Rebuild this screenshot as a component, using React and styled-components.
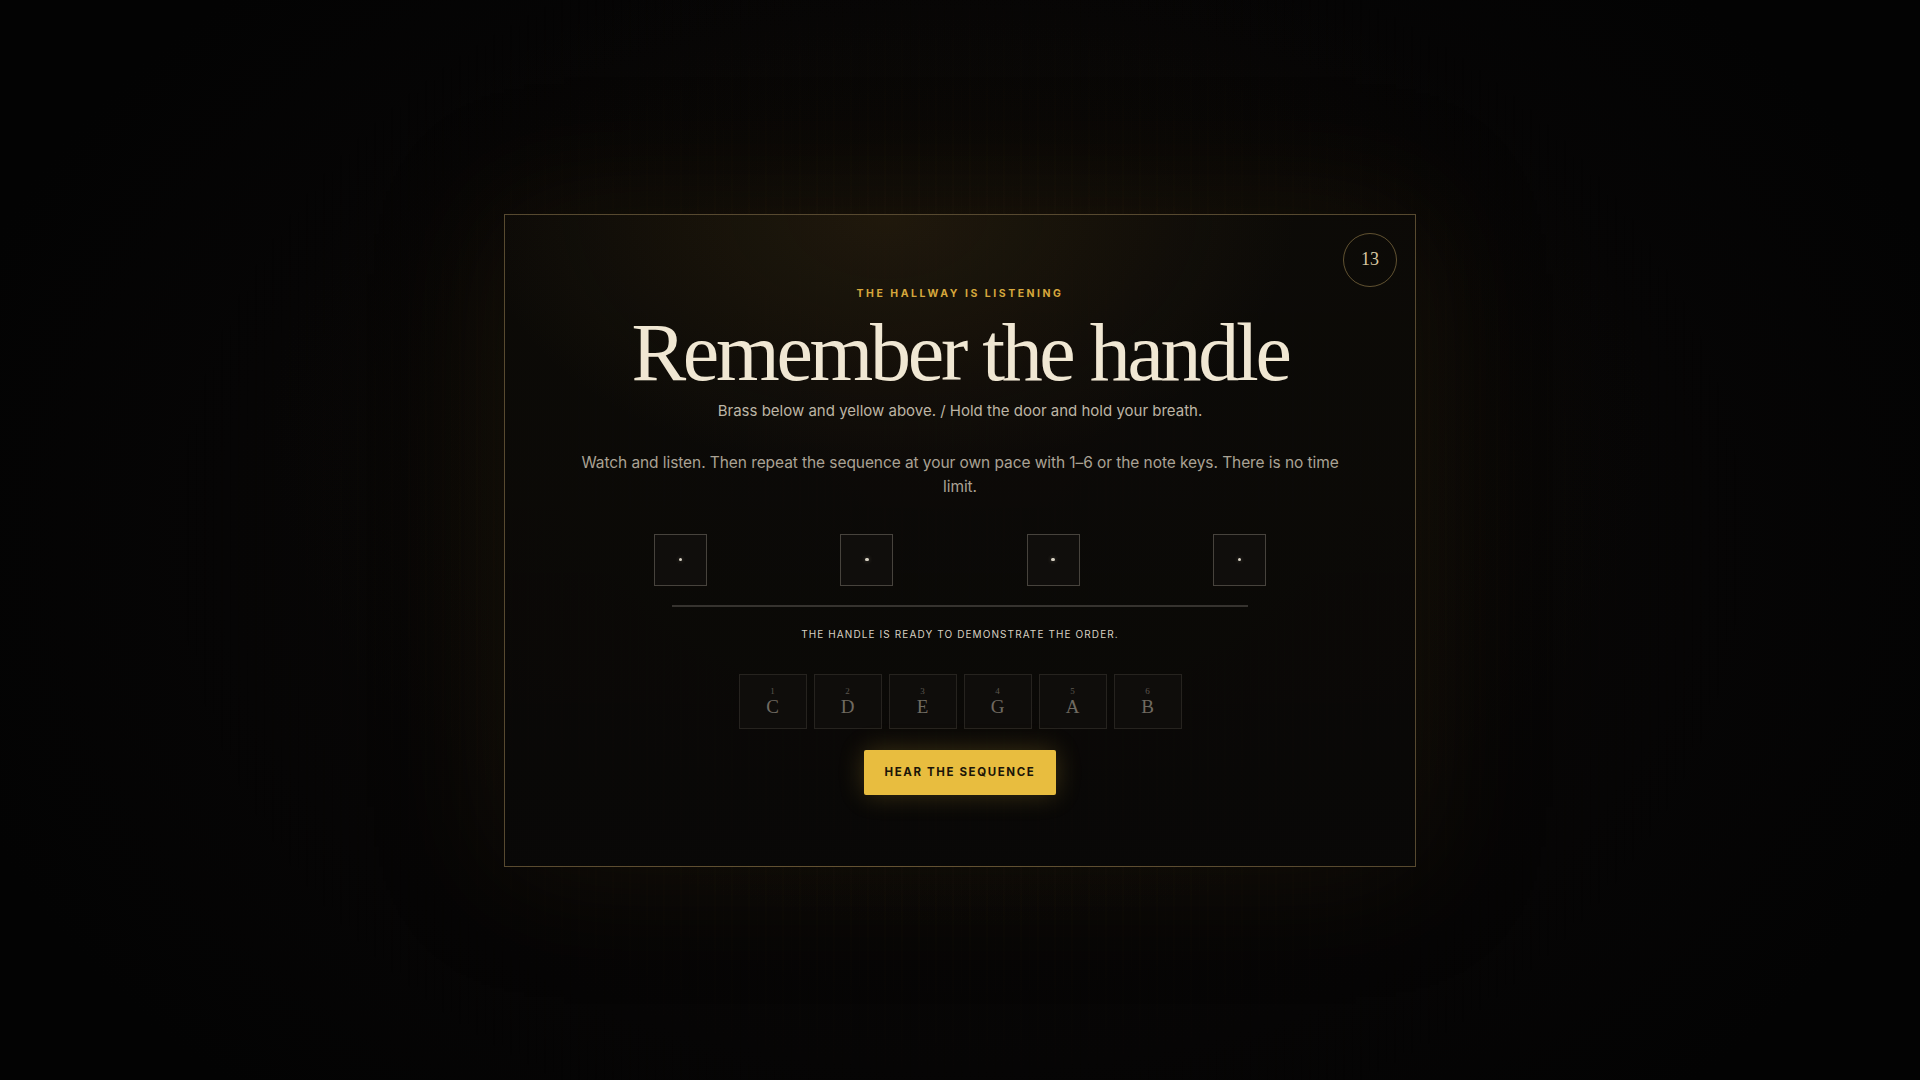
import styled, { createGlobalStyle } from 'styled-components';

const SANS = `Inter, 'Noto Sans', 'Liberation Sans', sans-serif`;
const SERIF = `'Liberation Serif', 'DejaVu Serif', serif`;

const GlobalStyle = createGlobalStyle`
	* { box-sizing: border-box; }
	html, body { margin: 0; padding: 0; background: #050404; }
	body { font-family: ${SANS}; }
`;

const SLOTS = [0, 1, 2, 3];
const NOTES = [
	{ key: '1', note: 'C' },
	{ key: '2', note: 'D' },
	{ key: '3', note: 'E' },
	{ key: '4', note: 'G' },
	{ key: '5', note: 'A' },
	{ key: '6', note: 'B' },
];

function App() {
	return (
		<Page>
			<GlobalStyle />
			<Panel>
				<Badge>13</Badge>
				<Eyebrow>The hallway is listening</Eyebrow>
				<Title>Remember the handle</Title>
				<Subtitle>Brass below and yellow above. / Hold the door and hold your breath.</Subtitle>
				<Body>
					Watch and listen. Then repeat the sequence at your own pace with 1–6 or the note keys. There is no
					time limit.
				</Body>

				<SlotRow>
					{SLOTS.map((i) => (
						<Slot key={i}>
							<SlotDot />
						</Slot>
					))}
				</SlotRow>
				<Track />
				<Status>The handle is ready to demonstrate the order.</Status>

				<Keys>
					{NOTES.map((n) => (
						<NoteKey key={n.key} type='button' disabled>
							<KeyNum>{n.key}</KeyNum>
							<KeyNote>{n.note}</KeyNote>
						</NoteKey>
					))}
				</Keys>

				<PlayButton type='button'>Hear the sequence</PlayButton>
			</Panel>
		</Page>
	);
}

const Page = styled.div`
	position: relative;
	min-height: 100vh;
	display: flex;
	align-items: center;
	justify-content: center;
	background:
		radial-gradient(ellipse 36% 46% at 50% 40%, rgba(72, 54, 18, 0.3), rgba(40, 30, 10, 0.1) 60%, transparent 100%),
		radial-gradient(ellipse 55% 70% at 50% 50%, #0b0907 0%, #060505 70%, #030303 100%);

	// curtain streaks, faded out toward the edges
	&::before {
		content: '';
		position: absolute;
		inset: 0;
		pointer-events: none;
		background: repeating-linear-gradient(
			90deg,
			rgba(120, 95, 50, 0.04) 0 2px,
			transparent 2px 9px,
			rgba(90, 70, 35, 0.03) 9px 10px,
			transparent 10px 17px
		);
		-webkit-mask-image: radial-gradient(ellipse 42% 60% at 50% 50%, #000 40%, transparent 100%);
		mask-image: radial-gradient(ellipse 42% 60% at 50% 50%, #000 40%, transparent 100%);
	}
`;

const Panel = styled.section`
	position: relative;
	z-index: 1;
	width: 912px;
	padding: 72px 56px 71px;
	display: flex;
	flex-direction: column;
	align-items: center;
	border: 1px solid rgba(196, 164, 104, 0.42);
	background:
		radial-gradient(ellipse 45% 40% at 42% 0%, rgba(110, 82, 30, 0.2), transparent 100%),
		linear-gradient(180deg, rgba(12, 10, 7, 0.92), rgba(9, 8, 7, 0.96));
	box-shadow: 0 0 120px rgba(60, 45, 15, 0.25);
`;

const Badge = styled.div`
	position: absolute;
	top: 18px;
	right: 18px;
	width: 54px;
	height: 54px;
	border-radius: 50%;
	border: 1px solid rgba(200, 168, 100, 0.45);
	display: flex;
	align-items: center;
	justify-content: center;
	font-family: ${SERIF};
	font-size: 18px;
	color: #d8c7a0;
`;

const Eyebrow = styled.div`
	font-size: 10.5px;
	line-height: 14px;
	font-weight: 700;
	letter-spacing: 0.24em;
	text-transform: uppercase;
	color: #d6a73c;
`;

const Title = styled.h1`
	margin: 11px 0 0;
	font-family: ${SERIF};
	font-weight: 400;
	font-size: 82px;
	line-height: 82px;
	letter-spacing: -0.04em;
	color: #f0e7d3;
	white-space: nowrap;
`;

const Subtitle = styled.p`
	margin: 6px 0 0;
	font-size: 15px;
	line-height: 22px;
	color: #bdb5a5;
`;

const Body = styled.p`
	margin: 29px 0 0;
	max-width: 790px;
	font-size: 15.5px;
	line-height: 24px;
	letter-spacing: -0.005em;
	text-align: center;
	color: #aaa294;
`;

const SlotRow = styled.div`
	margin-top: 35px;
	width: 612px;
	display: flex;
	justify-content: space-between;
`;

const Slot = styled.div`
	width: 53px;
	height: 52px;
	border: 1px solid #47433d;
	background: #100e0c;
	display: flex;
	align-items: center;
	justify-content: center;
`;

const SlotDot = styled.span`
	width: 3.5px;
	height: 3.5px;
	border-radius: 50%;
	background: #d8d2c4;
	box-shadow: 0 0 4px rgba(230, 220, 200, 0.35);
`;

const Track = styled.div`
	margin-top: 19px;
	width: 576px;
	height: 2px;
	background: #36332f;
`;

const Status = styled.div`
	margin-top: 20px;
	font-size: 10px;
	line-height: 14px;
	font-weight: 400;
	letter-spacing: 0.11em;
	text-transform: uppercase;
	color: #d9d2c3;
`;

const Keys = styled.div`
	margin-top: 33px;
	display: grid;
	grid-template-columns: repeat(6, 68px);
	gap: 7px;
`;

const NoteKey = styled.button`
	height: 55px;
	padding: 0;
	border: 1px solid #26231f;
	background: #0f0d0b;
	display: flex;
	flex-direction: column;
	align-items: center;
	justify-content: center;
	gap: 1px;
	cursor: not-allowed;
`;

const KeyNum = styled.span`
	font-family: ${SERIF};
	font-size: 9px;
	line-height: 10px;
	color: #5c574f;
`;

const KeyNote = styled.span`
	font-family: ${SERIF};
	font-size: 19px;
	line-height: 20px;
	color: #6f6a61;
`;

const PlayButton = styled.button`
	margin-top: 21px;
	height: 45px;
	padding: 0 21px;
	border: none;
	border-radius: 2px;
	background: #e8bd3f;
	font-family: ${SANS};
	font-size: 11.5px;
	font-weight: 700;
	letter-spacing: 0.14em;
	text-transform: uppercase;
	color: #1b1508;
	box-shadow: 0 0 26px rgba(232, 189, 63, 0.22);
	cursor: pointer;
`;

export default App;
